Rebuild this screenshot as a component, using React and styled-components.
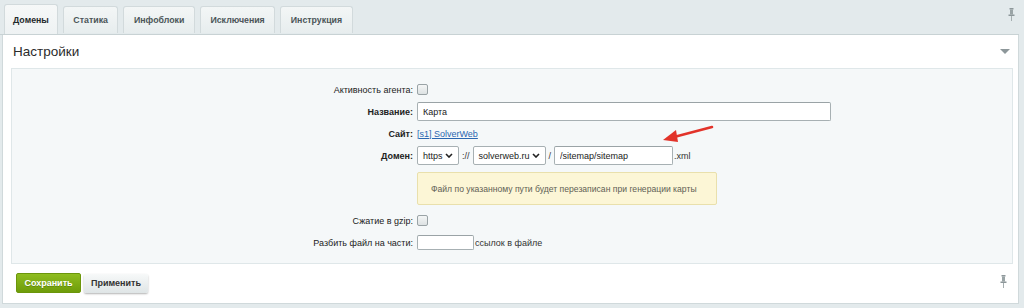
import styled, { createGlobalStyle } from 'styled-components';

const GlobalStyle = createGlobalStyle`
  html, body {
    margin: 0;
    background: #e3eaec;
    font-family: "Liberation Sans", Arial, sans-serif;
  }
`;

function Pin() {
  return (
    <svg width="7" height="13" viewBox="0 0 7 13">
      <rect x="1.5" y="0" width="4" height="1.5" fill="#8d979a" />
      <rect x="2" y="1.5" width="3" height="5" fill="#9aa4a6" />
      <rect x="0.5" y="6.5" width="6" height="1.5" fill="#8d979a" />
      <rect x="3" y="8" width="1" height="5" fill="#a5aeb0" />
    </svg>
  );
}

function Chevron() {
  return (
    <svg width="8" height="5" viewBox="0 0 8 5">
      <path d="M1 1 L4 4 L7 1" stroke="#222" strokeWidth="1.6" fill="none" />
    </svg>
  );
}

const tabs = ['Домены', 'Статика', 'Инфоблоки', 'Исключения', 'Инструкция'];

export default function App() {
  return (
    <Page>
      <GlobalStyle />
      <TabBar>
        <Tabs>
          {tabs.map((t, i) => (
            <Tab key={t} $active={i === 0}>{t}</Tab>
          ))}
        </Tabs>
        <PinSlot><Pin /></PinSlot>
      </TabBar>

      <Panel>
        <Header>
          <Title>Настройки</Title>
          <Collapse />
        </Header>

        <FormBox>
          <Row>
            <Label>Активность агента:</Label>
            <Control><Check /></Control>
          </Row>
          <Row>
            <Label $bold>Название:</Label>
            <Control><TextInput $w={414} defaultValue="Карта" /></Control>
          </Row>
          <Row>
            <Label $bold>Сайт:</Label>
            <Control><SiteLink href="#">[s1] SolverWeb</SiteLink></Control>
          </Row>
          <Row>
            <Label $bold>Домен:</Label>
            <Control>
              <Select $w={42}>https<Chevron /></Select>
              <Sep>://</Sep>
              <Select $w={73}>solverweb.ru<Chevron /></Select>
              <Sep>/</Sep>
              <TextInput $w={119} defaultValue="/sitemap/sitemap" />
              <Suffix>.xml</Suffix>
            </Control>
          </Row>
          <NoteRow>
            <span />
            <Note>Файл по указанному пути будет перезаписан при генерации карты</Note>
          </NoteRow>
          <Row>
            <Label>Сжатие в gzip:</Label>
            <Control><Check /></Control>
          </Row>
          <Row>
            <Label>Разбить файл на части:</Label>
            <Control>
              <TextInput $w={57} $h={15} />
              <Suffix>ссылок в файле</Suffix>
            </Control>
          </Row>

          <Arrow width="52" height="18" viewBox="0 0 52 18">
            <path d="M50 2 L12 12" stroke="#e2332a" strokeWidth="2.6" strokeLinecap="round" />
            <path d="M1 15 L14 5 L16 17 Z" fill="#e2332a" />
          </Arrow>
        </FormBox>

        <Footer>
          <SaveButton>Сохранить</SaveButton>
          <ApplyButton>Применить</ApplyButton>
          <FooterPin><Pin /></FooterPin>
        </Footer>
      </Panel>
    </Page>
  );
}

const Page = styled.div`
  width: 1024px;
  height: 308px;
  overflow: hidden;
`;

const TabBar = styled.div`
  height: 34px;
  display: flex;
  align-items: flex-end;
  justify-content: space-between;
  padding: 0 4px 0 4px;
  border-bottom: 1px solid #c8d2d4;
  margin-right: 5px;
`;

const Tabs = styled.div`
  display: flex;
  align-items: flex-end;
  gap: 4px;
`;

const Tab = styled.div`
  height: ${p => (p.$active ? 29 : 26)}px;
  padding: 0 ${p => (p.$active ? 8 : 9.5)}px;
  margin-right: 1px;
  display: flex;
  align-items: center;
  font-size: 8.8px;
  font-weight: bold;
  color: ${p => (p.$active ? '#1f2a2c' : '#4b5558')};
  background: ${p => (p.$active
    ? 'linear-gradient(#f6f8f8, #eef2f3)'
    : 'linear-gradient(#f3f6f6, #e7edee)')};
  border: 1px solid #d2dadc;
  border-bottom: none;
  border-radius: 3px 3px 0 0;
  margin-bottom: ${p => (p.$active ? 0 : 1)}px;
`;

const PinSlot = styled.div`
  align-self: center;
  margin-top: -3px;
`;

const Panel = styled.div`
  margin: 0 5px 0 2px;
  background: #fff;
  border: 1px solid #d0d9db;
  border-top: none;
  height: 268px;
`;

const Header = styled.div`
  height: 33px;
  display: flex;
  align-items: center;
  justify-content: space-between;
  padding: 0 8px 0 10px;
`;

const Title = styled.div`
  font-size: 13.5px;
  color: #2b2b2b;
`;

const Collapse = styled.div`
  width: 0;
  height: 0;
  border-left: 5px solid transparent;
  border-right: 5px solid transparent;
  border-top: 5px solid #8d979a;
`;

const FormBox = styled.div`
  position: relative;
  margin: 0 5px 0 8px;
  height: 196px;
  box-sizing: border-box;
  padding-top: 11px;
  background: #f5f8f9;
  border: 1px solid #dfe7e9;
  display: flex;
  flex-direction: column;
  gap: 3px;
`;

const Row = styled.div`
  display: grid;
  grid-template-columns: 401px 1fr;
  column-gap: 4px;
  align-items: center;
  min-height: 19px;
`;

const NoteRow = styled(Row)`
  margin: 4px 0 3px;
`;

const Label = styled.div`
  text-align: right;
  font-size: 9px;
  color: #222;
  font-weight: ${p => (p.$bold ? 'bold' : 'normal')};
`;

const Control = styled.div`
  display: flex;
  align-items: center;
  gap: 3px;
  font-size: 9px;
`;

const Check = styled.span`
  width: 9px;
  height: 9px;
  border: 1px solid #9aa3a6;
  border-radius: 2px;
  background: linear-gradient(#f4f6f6, #dde2e3);
`;

const TextInput = styled.input`
  width: ${p => p.$w}px;
  height: ${p => p.$h || 19}px;
  box-sizing: border-box;
  padding: 0 5px;
  border: 1px solid #a7b0b3;
  border-top-color: #9aa3a6;
  border-radius: 2px;
  background: #fff;
  font-family: inherit;
  font-size: 9px;
  color: #222;
  outline: none;
`;

const Select = styled.div`
  width: ${p => p.$w}px;
  height: 19px;
  box-sizing: border-box;
  padding: 0 5px 0 5px;
  border: 1px solid #a7b0b3;
  border-radius: 2px;
  background: #fff;
  display: flex;
  align-items: center;
  justify-content: space-between;
  font-size: 9px;
  color: #222;
`;

const Sep = styled.span`
  color: #333;
  font-size: 9px;
`;

const Suffix = styled.span`
  color: #333;
  font-size: 9px;
  margin-left: -2px;
`;

const SiteLink = styled.a`
  color: #2a67b1;
  font-size: 9px;
  text-decoration: underline;
`;

const Note = styled.div`
  width: 300px;
  height: 33px;
  box-sizing: border-box;
  padding-left: 13px;
  display: flex;
  align-items: center;
  white-space: nowrap;
  background: #fcf6d6;
  border: 1px solid #e9e0ac;
  border-radius: 2px;
  font-size: 8.6px;
  color: #5f5f55;
`;

const Arrow = styled.svg`
  position: absolute;
  left: 650px;
  top: 56px;
`;

const Footer = styled.div`
  height: 38px;
  display: flex;
  align-items: center;
  gap: 3px;
  padding: 0 11px 0 13px;
`;

const SaveButton = styled.button`
  height: 20px;
  width: 65px;
  padding: 0;
  border: 1px solid #6b960b;
  border-radius: 2px;
  background: linear-gradient(#8fbd1f, #6e9c0a);
  color: #fff;
  font-family: inherit;
  font-size: 9px;
  font-weight: bold;
  text-shadow: 0 1px 0 rgba(0, 0, 0, 0.2);
`;

const ApplyButton = styled.button`
  height: 19px;
  width: 64px;
  padding: 0;
  border: none;
  border-radius: 2px;
  background: linear-gradient(#f7f9f9, #dfe5e6);
  box-shadow: 0 1px 2px rgba(0, 0, 0, 0.3);
  color: #333;
  font-family: inherit;
  font-size: 9px;
  font-weight: bold;
`;

const FooterPin = styled.div`
  margin-left: auto;
`;
